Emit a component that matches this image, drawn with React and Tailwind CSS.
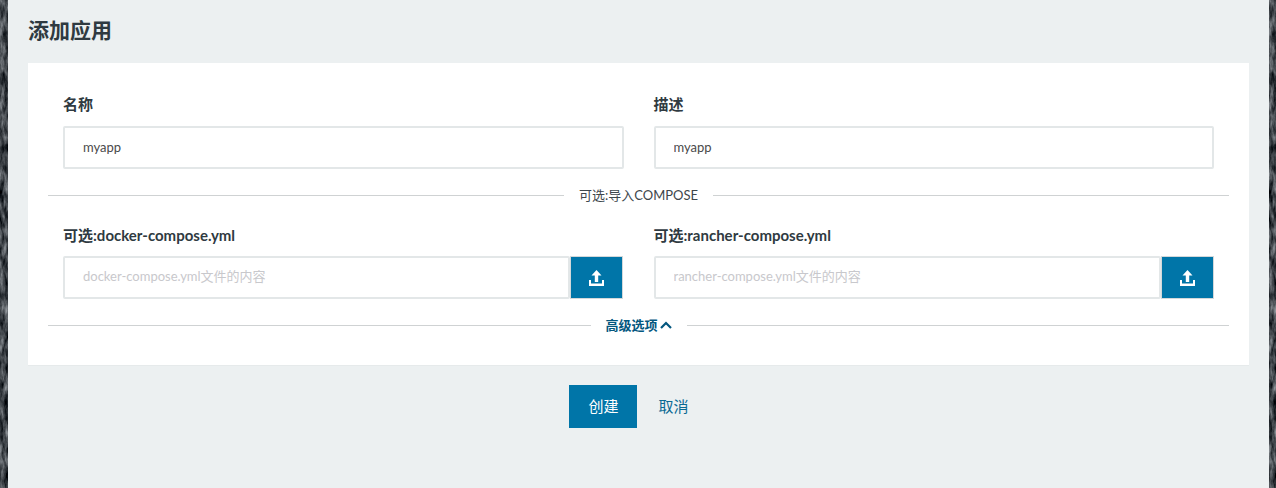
import React from "react";

const font = { fontFamily: 'Lato, "Noto Sans CJK SC", sans-serif' };

function Rock() {
  return (
    <svg className="w-full h-full block" aria-hidden="true" preserveAspectRatio="none">
      <filter id="rock" x="0" y="0" width="100%" height="100%" colorInterpolationFilters="sRGB">
        <feTurbulence type="fractalNoise" baseFrequency="0.22 0.07" numOctaves="4" seed="7" />
        <feColorMatrix type="matrix" values="0.85 0 0 0 -0.17  0.85 0 0 0 -0.15  0.85 0 0 0 -0.13  0 0 0 0 1" />
      </filter>
      <rect width="100%" height="100%" filter="url(#rock)" />
    </svg>
  );
}

function Upload() {
  return (
    <svg width="15" height="16" viewBox="0 0 15 16" fill="#fff" aria-hidden="true">
      <path d="M7.5 0 L12.5 5.5 H9.2 V12 H5.8 V5.5 H2.5 Z" />
      <path d="M0 10 H2 V13.6 H13 V10 H15 V16 H0 Z" />
    </svg>
  );
}

function Chevron() {
  return (
    <svg width="12" height="8" viewBox="0 0 12 8" fill="none" stroke="#04577f" strokeWidth="2.2" aria-hidden="true" className="ml-[2px]">
      <path d="M1 7 L6 2 L11 7" />
    </svg>
  );
}

function Field({ label, value }) {
  return (
    <div className="flex-1 min-w-0">
      <label className="block text-[15px] font-bold text-[#2f3a41] leading-[20px] mb-[12px]">{label}</label>
      <input
        readOnly
        value={value}
        className="block w-full h-[43px] pb-[2px] border-2 border-[#e3e7e8] rounded-[2px] bg-white px-[18px] text-[13px] text-[#4a4a4a] outline-none"
      />
    </div>
  );
}

function FileField({ label, placeholder, rowClass }) {
  return (
    <div className="flex-1 min-w-0">
      <label className="block text-[15px] font-bold text-[#2f3a41] leading-[20px] mb-[11px]">{label}</label>
      <div className={`flex h-[43px] ${rowClass}`}>
        <input
          readOnly
          placeholder={placeholder}
          className="block flex-1 min-w-0 h-full pb-[3px] border-2 border-[#e3e7e8] rounded-[2px] bg-white px-[18px] text-[13px] outline-none placeholder:text-[#c8c8cc]"
        />
        <button className="w-[53px] h-full bg-[#0075a8] border border-[#d3d8da] flex items-center justify-center">
          <Upload />
        </button>
      </div>
    </div>
  );
}

function Divider({ children, className }) {
  return (
    <div className={`flex items-center mx-[-15px] gap-[15px] ${className}`}>
      <div className="flex-1 h-px bg-[#cfd2d3]" />
      <div className="flex items-center text-[13px] leading-[20px]">{children}</div>
      <div className="flex-1 h-px bg-[#cfd2d3]" />
    </div>
  );
}

export default function App() {
  return (
    <div className="flex h-[488px] w-full overflow-hidden" style={font}>
      <div className="w-2 shrink-0"><Rock /></div>
      <main className="flex-1 min-w-0 bg-[#ecf0f1] px-5 pt-[16px]">
        <h1 className="text-[21px] font-bold leading-[28px] text-[#2f3a41] mb-[19px]">添加应用</h1>
        <section className="bg-white h-[303px] px-[35px] pt-[31px] border-b border-[#e6eaeb]">
          <div className="flex gap-[30px]">
            <Field label="名称" value="myapp" />
            <Field label="描述" value="myapp" />
          </div>
          <Divider className="mt-[16px]">
            <span className="text-[#3d464c]">可选:导入COMPOSE</span>
          </Divider>
          <div className="flex gap-[30px] mt-[20px]">
            <FileField label="可选:docker-compose.yml" placeholder="docker-compose.yml文件的内容" rowClass="mr-[1px]" />
            <FileField label="可选:rancher-compose.yml" placeholder="rancher-compose.yml文件的内容" rowClass="" />
          </div>
          <Divider className="mt-[16px]">
            <span className="font-bold text-[#04577f]">高级选项</span>
            <Chevron />
          </Divider>
        </section>
        <div className="flex justify-center mt-[19px] gap-[5px] pr-[3px]">
          <button className="w-[68px] h-[43px] bg-[#0075a8] text-white text-[15px]">创建</button>
          <button className="px-[16px] h-[43px] text-[#0a6a94] text-[15px]">取消</button>
        </div>
      </main>
      <div className="w-[7px] shrink-0"><Rock /></div>
    </div>
  );
}
